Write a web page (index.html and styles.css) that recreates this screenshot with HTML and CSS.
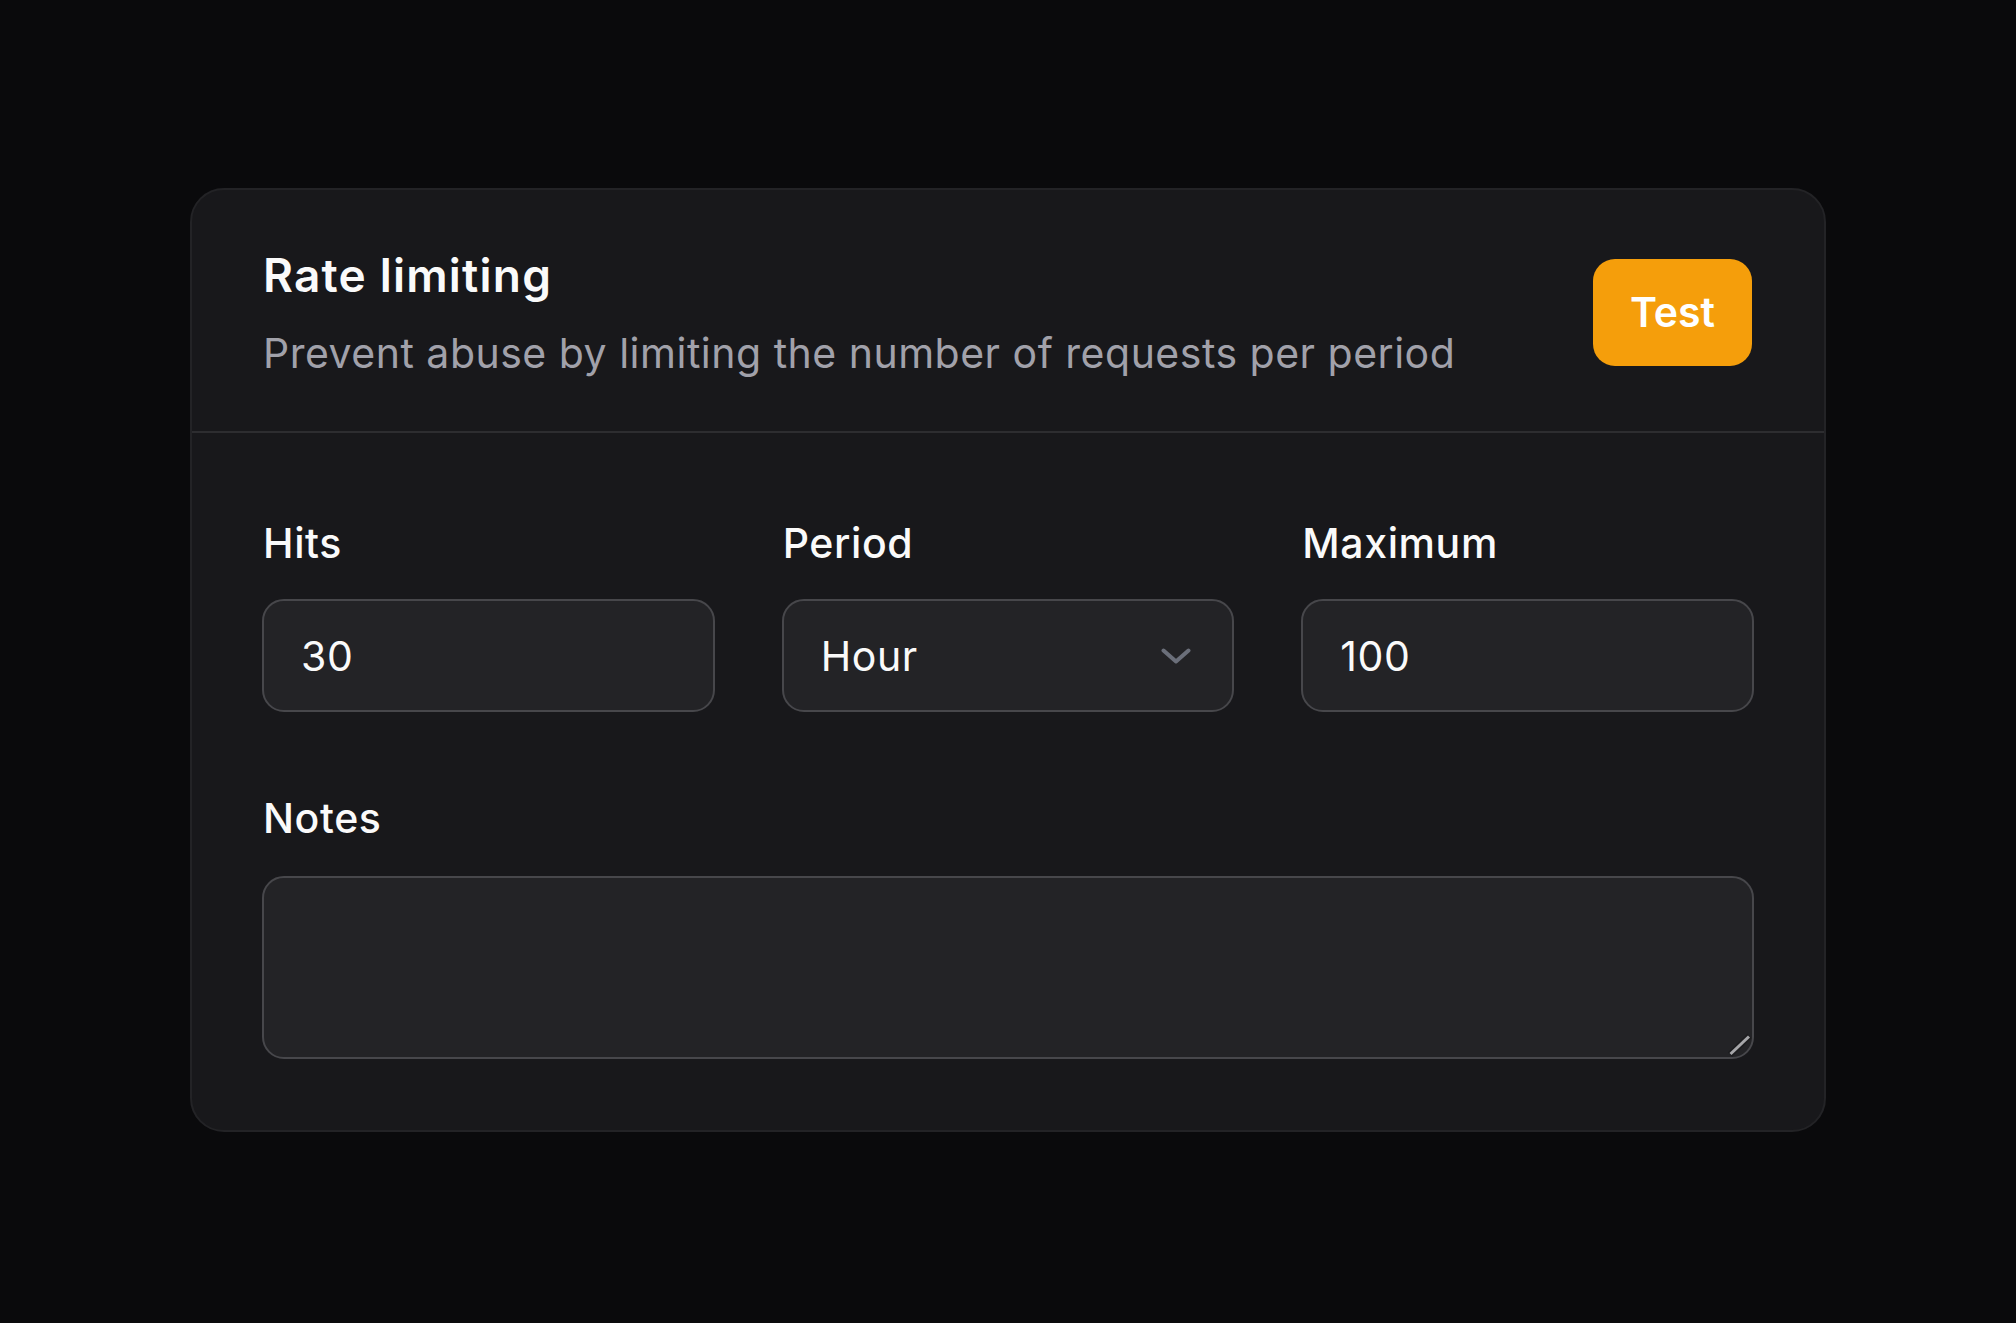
FILE: index.html
```html
<!DOCTYPE html>
<html lang="en">
<head>
<meta charset="utf-8">
<title>Rate limiting</title>
<link rel="stylesheet" href="styles.css">
</head>
<body>
<main class="page">
  <section class="card">
    <header class="card-header">
      <div class="heading">
        <h1 class="title">Rate limiting</h1>
        <p class="subtitle">Prevent abuse by limiting the number of requests per period</p>
      </div>
      <button class="btn" type="button">Test</button>
    </header>
    <div class="card-body">
      <div class="fields">
        <label class="field">
          <span class="label">Hits</span>
          <input class="control" type="text" value="30">
        </label>
        <label class="field">
          <span class="label">Period</span>
          <div class="control select">
            <span>Hour</span>
            <svg class="chevron" width="30" height="16" viewBox="0 0 30 16" aria-hidden="true"><path d="M2.5 2.5 L15 13.5 L27.5 2.5" fill="none" stroke="#6b6f7a" stroke-width="4" stroke-linecap="round" stroke-linejoin="round"/></svg>
          </div>
        </label>
        <label class="field">
          <span class="label">Maximum</span>
          <input class="control" type="text" value="100">
        </label>
      </div>
      <label class="field notes">
        <span class="label">Notes</span>
        <span class="textarea-wrap">
          <textarea class="control textarea"></textarea>
          <svg class="grip" width="28" height="28" viewBox="0 0 28 28" aria-hidden="true"><path d="M4 23.5 L23.5 5" stroke="#1c1c1e" stroke-width="6"/><path d="M4.5 23 L23 5.5" stroke="#a6a6a9" stroke-width="3"/></svg>
        </span>
      </label>
    </div>
  </section>
</main>
</body>
</html>
```

FILE: styles.css
```css
* { box-sizing: border-box; }

html, body {
  margin: 0;
  padding: 0;
  background: #0a0a0c;
}

body {
  font-family: Inter, "Liberation Sans", sans-serif;
  color: #f4f4f5;
}

.page {
  padding-top: 188px;
  min-height: 1323px;
}

.card {
  width: 1636px;
  margin: 0 auto;
  background: #18181b;
  border: 2px solid #232326;
  border-radius: 34px;
}

.card-header {
  display: flex;
  align-items: center;
  justify-content: space-between;
  padding: 57px 72px 53px 70px;
  border-bottom: 2px solid #2d2d30;
}

.heading { padding-left: 1px; }

.title {
  margin: 0;
  font-size: 46px;
  line-height: 56px;
  font-weight: 600;
  letter-spacing: 1.2px;
  color: #fafafa;
}

.subtitle {
  margin: 25px 0 0;
  font-size: 41px;
  line-height: 50px;
  font-weight: 400;
  letter-spacing: 0.5px;
  color: #a1a1aa;
}

.btn {
  font-family: inherit;
  font-size: 41px;
  line-height: 50px;
  font-weight: 600;
  color: #ffffff;
  background: #f59e0b;
  border: none;
  border-radius: 22px;
  padding: 28px 37px 29px;
}

.card-body {
  padding: 85px 70px 71px;
  display: flex;
  flex-direction: column;
  gap: 81px;
}

.fields {
  display: grid;
  grid-template-columns: repeat(3, 1fr);
  column-gap: 67px;
}

.field {
  display: flex;
  flex-direction: column;
  gap: 31px;
}

.notes { gap: 33px; }

.label {
  padding-left: 1px;
  font-size: 41px;
  line-height: 50px;
  font-weight: 500;
  letter-spacing: 0.6px;
  color: #fafafa;
}

.control {
  display: block;
  width: 100%;
  height: 113px;
  margin: 0;
  padding: 0 41px 0 37px;
  font-family: inherit;
  font-size: 41px;
  font-weight: 400;
  letter-spacing: 0.6px;
  color: #fafafa;
  background: #232326;
  border: 2px solid #47474b;
  border-radius: 22px;
  outline: none;
}

.select {
  display: flex;
  align-items: center;
  justify-content: space-between;
}

.chevron { display: block; }

.textarea-wrap {
  position: relative;
  display: block;
}

.textarea {
  height: 183px;
  padding: 24px 37px;
  resize: none;
}

.grip {
  position: absolute;
  right: 0;
  bottom: 0;
  display: block;
}
```
